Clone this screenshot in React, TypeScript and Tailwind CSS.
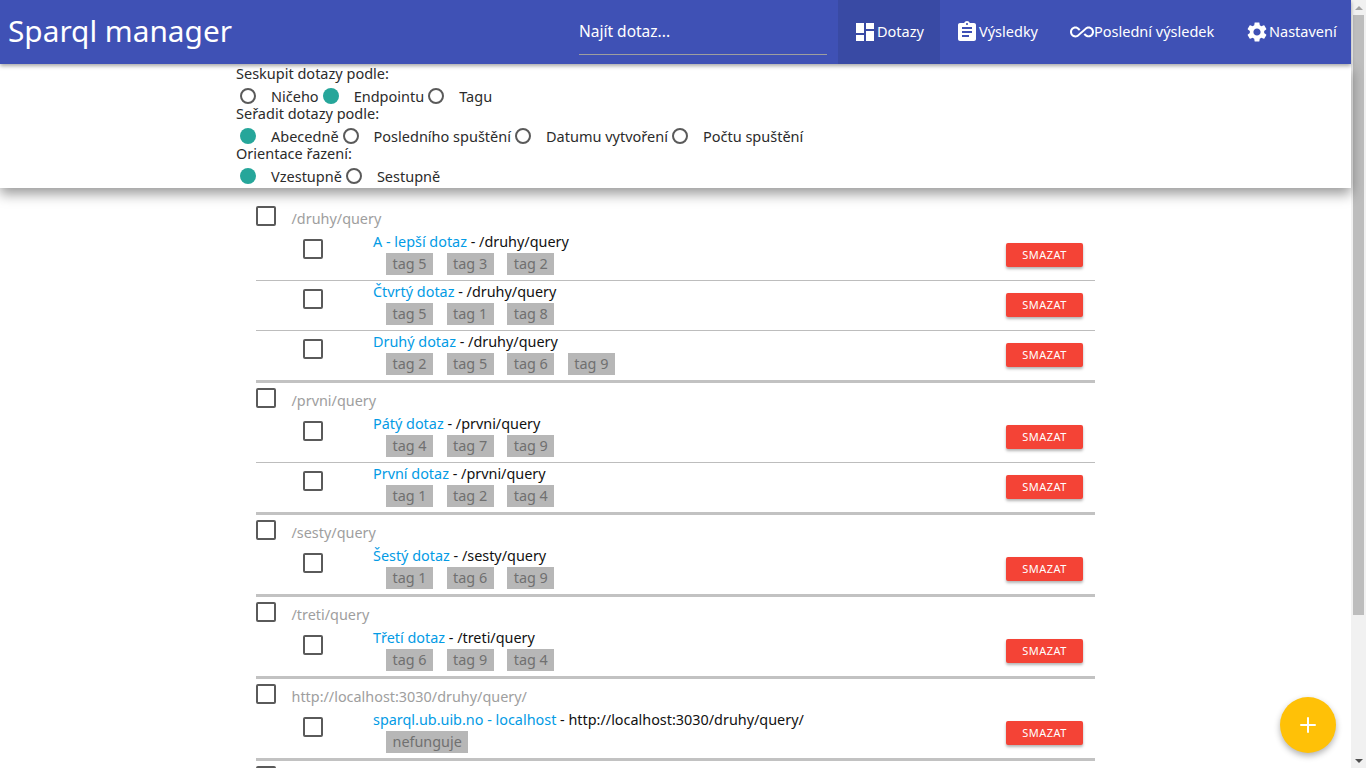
import type { ReactNode } from 'react'
import { Plus } from 'lucide-react'

type Query = { name: string; endpoint: string; tags: string[] }
type Group = { endpoint: string; queries: Query[] }

const groups: Group[] = [
  {
    endpoint: '/druhy/query',
    queries: [
      { name: 'A - lepší dotaz', endpoint: '/druhy/query', tags: ['tag 5', 'tag 3', 'tag 2'] },
      { name: 'Čtvrtý dotaz', endpoint: '/druhy/query', tags: ['tag 5', 'tag 1', 'tag 8'] },
      { name: 'Druhý dotaz', endpoint: '/druhy/query', tags: ['tag 2', 'tag 5', 'tag 6', 'tag 9'] },
    ],
  },
  {
    endpoint: '/prvni/query',
    queries: [
      { name: 'Pátý dotaz', endpoint: '/prvni/query', tags: ['tag 4', 'tag 7', 'tag 9'] },
      { name: 'První dotaz', endpoint: '/prvni/query', tags: ['tag 1', 'tag 2', 'tag 4'] },
    ],
  },
  {
    endpoint: '/sesty/query',
    queries: [{ name: 'Šestý dotaz', endpoint: '/sesty/query', tags: ['tag 1', 'tag 6', 'tag 9'] }],
  },
  {
    endpoint: '/treti/query',
    queries: [{ name: 'Třetí dotaz', endpoint: '/treti/query', tags: ['tag 6', 'tag 9', 'tag 4'] }],
  },
  {
    endpoint: 'http://localhost:3030/druhy/query/',
    queries: [
      {
        name: 'sparql.ub.uib.no - localhost',
        endpoint: 'http://localhost:3030/druhy/query/',
        tags: ['nefunguje'],
      },
    ],
  },
  // only the top of this group's checkbox is on screen
  { endpoint: '', queries: [] },
]

function Radio({ label, checked }: { label: string; checked?: boolean }) {
  return (
    <span className="flex items-center leading-4">
      <span
        className={
          checked
            ? 'ml-[4px] mr-[15px] h-4 w-4 rounded-full bg-[#26a69a]'
            : 'ml-[4px] mr-[15px] h-4 w-4 rounded-full border-2 border-[#5a5a5a]'
        }
      />
      <span>{label}</span>
    </span>
  )
}

function Checkbox() {
  return <span className="block h-5 w-5 rounded-[2px] border-2 border-[#5a5a5a]" />
}

function NavItem({ icon, label, className }: { icon: ReactNode; label: string; className: string }) {
  return (
    <a className={`flex h-16 items-center pl-[15px] ${className}`}>
      {icon}
      <span>{label}</span>
    </a>
  )
}

function QueryRow({ query, last }: { query: Query; last: boolean }) {
  return (
    <div className={last ? 'flex h-[49px]' : 'flex h-[50px] border-b border-[#bdbdbd]'}>
      <div className="w-[47px] shrink-0" />
      <div className="w-[70px] shrink-0 pt-[8px]">
        <Checkbox />
      </div>
      <div className="grow">
        <div className="h-[22px] leading-[22px]">
          <span className="text-[#039be5]">{query.name}</span>
          <span className="text-[#111]"> - {query.endpoint}</span>
        </div>
        <div className="flex gap-[13.5px] pl-[13px]">
          {query.tags.map((tag, i) => (
            <span key={i} className="h-[22px] bg-[#b7b7b7] px-[6.5px] leading-[22px] text-[#707070]">
              {tag}
            </span>
          ))}
        </div>
      </div>
      <div className="w-[89px] shrink-0 pt-[12px]">
        <button className="h-6 w-[77px] rounded-[2px] bg-[#f44336] text-[11px] tracking-[0.5px] text-white shadow-[0_2px_3px_rgba(0,0,0,0.3)]">
          SMAZAT
        </button>
      </div>
    </div>
  )
}

export default function App() {
  return (
    <div className="flex h-screen overflow-hidden bg-white font-['Noto_Sans',sans-serif] text-[14.4px] text-[#2b2b2b]">
      <div className="relative w-[1351px] shrink-0">
        <header className="relative z-20 flex h-16 items-center bg-[#3f51b5] text-[14.5px] text-white shadow-[0_2px_4px_rgba(0,0,0,0.35)]">
          <div className="-mt-[2px] pl-2 text-[29.8px] leading-none">Sparql manager</div>
          <div className="ml-auto flex items-center">
            <div className="mr-[11px] flex h-[46px] w-[248px] items-center border-b border-[#9e9e9e] text-[15.5px]">
              Najít dotaz...
            </div>
            <NavItem
              className="w-[102px] bg-[#394aa4]"
              label="Dotazy"
              icon={
                <svg viewBox="0 0 24 24" className="h-6 w-6 shrink-0 fill-white">
                  <path d="M3 13h8V3H3v10zm0 8h8v-6H3v6zm10 0h8V11h-8v10zm0-18v6h8V3h-8z" />
                </svg>
              }
            />
            <NavItem
              className="w-[115px]"
              label="Výsledky"
              icon={
                <svg viewBox="0 0 24 24" className="h-6 w-6 shrink-0 fill-white">
                  <path d="M19 3h-4.18C14.4 1.84 13.3 1 12 1s-2.4.84-2.82 2H5c-1.1 0-2 .9-2 2v14c0 1.1.9 2 2 2h14c1.1 0 2-.9 2-2V5c0-1.1-.9-2-2-2zm-7 0c.55 0 1 .45 1 1s-.45 1-1 1-1-.45-1-1 .45-1 1-1zm2 14H7v-2h7v2zm3-4H7v-2h10v2zm0-4H7V7h10v2z" />
                </svg>
              }
            />
            <NavItem
              className="w-[175px]"
              label="Poslední výsledek"
              icon={
                <svg viewBox="0 0 24 24" className="h-6 w-6 shrink-0 fill-white">
                  <path d="M18.6 6.62c-1.44 0-2.8.56-3.77 1.53L12 10.66 10.48 12h.01L7.8 14.39c-.64.64-1.49.99-2.4.99-1.87 0-3.39-1.51-3.39-3.38S3.53 8.62 5.4 8.62c.91 0 1.76.35 2.44 1.03l1.13 1 1.51-1.34L9.22 8.2C8.2 7.18 6.84 6.62 5.4 6.62 2.42 6.62 0 9.04 0 12s2.42 5.38 5.4 5.38c1.44 0 2.8-.56 3.77-1.53l2.83-2.5.01.01L13.52 12h-.01l2.69-2.39c.64-.64 1.49-.99 2.4-.99 1.87 0 3.39 1.51 3.39 3.38s-1.52 3.38-3.39 3.38c-.9 0-1.76-.35-2.44-1.03l-1.14-1.01-1.51 1.34 1.27 1.12c1.02 1.01 2.37 1.57 3.82 1.57 2.98 0 5.4-2.41 5.4-5.38s-2.42-5.37-5.4-5.37z" />
                </svg>
              }
            />
            <NavItem
              className="w-[121px]"
              label="Nastavení"
              icon={
                <svg viewBox="0 0 24 24" className="h-6 w-6 shrink-0 fill-white">
                  <path d="M19.14 12.94c.04-.3.06-.61.06-.94 0-.32-.02-.64-.07-.94l2.03-1.58c.18-.14.23-.41.12-.61l-1.92-3.32c-.12-.22-.37-.29-.59-.22l-2.39.96c-.5-.38-1.03-.7-1.62-.94l-.36-2.54c-.04-.24-.24-.41-.48-.41h-3.84c-.24 0-.43.17-.47.41l-.36 2.54c-.59.24-1.13.57-1.62.94l-2.39-.96c-.22-.08-.47 0-.59.22L2.74 8.87c-.12.21-.08.47.12.61l2.03 1.58c-.05.3-.09.63-.09.94s.02.64.07.94l-2.03 1.58c-.18.14-.23.41-.12.61l1.92 3.32c.12.22.37.29.59.22l2.39-.96c.5.38 1.03.7 1.62.94l.36 2.54c.05.24.24.41.48.41h3.84c.24 0 .44-.17.47-.41l.36-2.54c.59-.24 1.13-.56 1.62-.94l2.39.96c.22.08.47 0 .59-.22l1.92-3.32c.12-.22.07-.47-.12-.61l-2.01-1.58zM12 15.6c-1.98 0-3.6-1.62-3.6-3.6s1.62-3.6 3.6-3.6 3.6 1.62 3.6 3.6-1.62 3.6-3.6 3.6z" />
                </svg>
              }
            />
          </div>
        </header>

        <section className="relative z-10 h-[124px] pl-[236px] text-[14.5px] shadow-[0_6px_12px_rgba(0,0,0,0.4)]">
          <div className="h-[18px] leading-[18px]">Seskupit dotazy podle:</div>
          <div className="flex h-[22px] items-end">
            <Radio label="Ničeho" />
            <Radio label="Endpointu" checked />
            <Radio label="Tagu" />
          </div>
          <div className="h-[18px] leading-[18px]">Seřadit dotazy podle:</div>
          <div className="flex h-[22px] items-end">
            <Radio label="Abecedně" checked />
            <Radio label="Posledního spuštění" />
            <Radio label="Datumu vytvoření" />
            <Radio label="Počtu spuštění" />
          </div>
          <div className="h-[18px] leading-[18px]">Orientace řazení:</div>
          <div className="flex h-[22px] items-end">
            <Radio label="Vzestupně" checked />
            <Radio label="Sestupně" />
          </div>
        </section>

        <main className="ml-[256px] w-[839px] pt-[13px]">
          {groups.map((group) => (
            <div key={group.endpoint} className="border-b-[3px] border-[#c2c2c2]">
              <div className="flex h-[30px] items-start pt-[5px]">
                <Checkbox />
                <span className="ml-[15.5px] pt-[2px] leading-[22px] text-[#9e9e9e]">{group.endpoint}</span>
              </div>
              {group.queries.map((query, i) => (
                <QueryRow key={query.name} query={query} last={i === group.queries.length - 1} />
              ))}
            </div>
          ))}
        </main>

        <button className="absolute bottom-[15px] right-[15px] z-30 flex h-14 w-14 items-center justify-center rounded-full bg-[#ffc107] text-white shadow-[0_3px_6px_rgba(0,0,0,0.3)]">
          <Plus size={24} />
        </button>
      </div>

      <div className="flex w-[15px] shrink-0 flex-col bg-[#f1f1f1]">
        <div className="flex h-[15px] items-center justify-center">
          <span className="border-x-[4px] border-b-[4px] border-x-transparent border-b-[#a3a3a3]" />
        </div>
        <div className="mx-[2px] h-[600px] bg-[#bdbdbd]" />
        <div className="grow" />
        <div className="flex h-[15px] items-center justify-center">
          <span className="border-x-[4px] border-t-[4px] border-x-transparent border-t-[#505050]" />
        </div>
      </div>
    </div>
  )
}
